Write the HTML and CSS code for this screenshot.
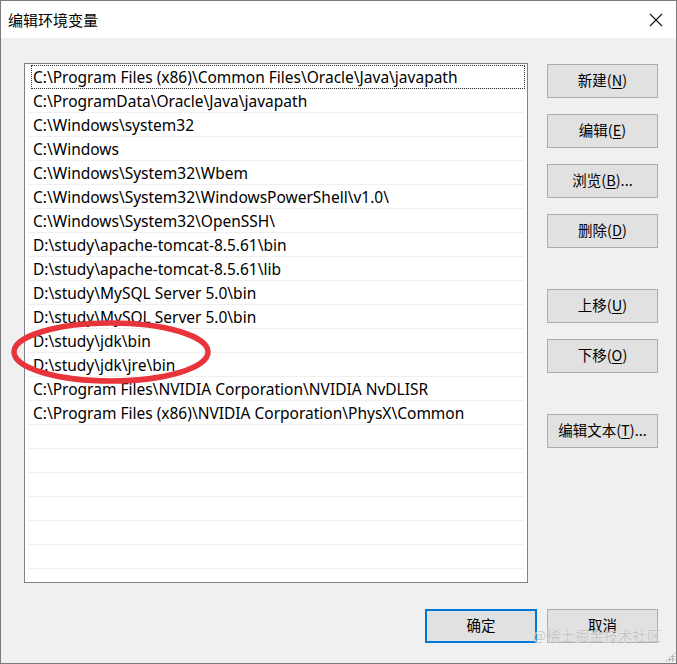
FILE: index.html
```html
<!DOCTYPE html>
<html lang="zh-CN">
<head>
<meta charset="utf-8">
<title>编辑环境变量</title>
<link rel="stylesheet" href="styles.css">
</head>
<body>
<div class="window">
  <div class="titlebar">
    <span class="title">编辑环境变量</span>
    <span class="close">
      <svg width="14" height="14" viewBox="0 0 14 14"><path d="M1 1L13 13M13 1L1 13" stroke="#111" stroke-width="1.1" fill="none"/></svg>
    </span>
  </div>
  <div class="body">
    <div class="main">
      <div class="listbox">
        <div class="row focus">C:\Program Files (x86)\Common Files\Oracle\Java\javapath</div>
        <div class="row">C:\ProgramData\Oracle\Java\javapath</div>
        <div class="row">C:\Windows\system32</div>
        <div class="row">C:\Windows</div>
        <div class="row">C:\Windows\System32\Wbem</div>
        <div class="row">C:\Windows\System32\WindowsPowerShell\v1.0\</div>
        <div class="row">C:\Windows\System32\OpenSSH\</div>
        <div class="row">D:\study\apache-tomcat-8.5.61\bin</div>
        <div class="row">D:\study\apache-tomcat-8.5.61\lib</div>
        <div class="row">D:\study\MySQL Server 5.0\bin</div>
        <div class="row">D:\study\MySQL Server 5.0\bin</div>
        <div class="row">D:\study\jdk\bin</div>
        <div class="row">D:\study\jdk\jre\bin</div>
        <div class="row">C:\Program Files\NVIDIA Corporation\NVIDIA NvDLISR</div>
        <div class="row">C:\Program Files (x86)\NVIDIA Corporation\PhysX\Common</div>
        <div class="row"></div>
        <div class="row"></div>
        <div class="row"></div>
        <div class="row"></div>
        <div class="row"></div>
        <div class="row"></div>
      </div>
      <div class="side">
        <div class="group">
          <button class="btn">新建(<u>N</u>)</button>
          <button class="btn">编辑(<u>E</u>)</button>
          <button class="btn">浏览(<u>B</u>)...</button>
          <button class="btn">删除(<u>D</u>)</button>
        </div>
        <div class="group">
          <button class="btn">上移(<u>U</u>)</button>
          <button class="btn">下移(<u>O</u>)</button>
        </div>
        <div class="group">
          <button class="btn">编辑文本(<u>T</u>)...</button>
        </div>
      </div>
    </div>
    <div class="footer">
      <button class="btn primary">确定</button>
      <button class="btn">取消</button>
    </div>
  </div>
  <svg class="mark" width="210" height="72" viewBox="0 0 210 72"><ellipse cx="105" cy="36" rx="97" ry="29" fill="none" stroke="#e8353c" stroke-width="5.5"/></svg>
  <span class="watermark">@稀土掘金技术社区</span>
  <span class="grip"></span>
</div>
</body>
</html>
```

FILE: styles.css
```css
* { box-sizing: border-box; }
html, body { margin: 0; padding: 0; background: #fff; }
body {
  font-family: "Noto Sans", "Noto Sans CJK SC", sans-serif;
  font-size: 15px;
  color: #000;
}
.window {
  position: relative;
  width: 677px;
  height: 664px;
  border: 1px solid #7a7a7a;
  overflow: hidden;
  display: flex;
  flex-direction: column;
}
.titlebar {
  height: 37px;
  background: #fff;
  display: flex;
  align-items: center;
  justify-content: space-between;
  padding: 0 13px 0 7px;
  flex: none;
}
.title {
  font-family: "Noto Sans CJK SC", sans-serif;
  font-size: 15px;
  line-height: 20px;
}
.close { display: flex; }
.body {
  flex: 1;
  background: #f0f0f0;
  padding: 25px 18px 0 23px;
  display: flex;
  flex-direction: column;
}
.main {
  display: flex;
  gap: 19px;
}
.listbox {
  width: 504px;
  height: 520px;
  background: #fff;
  border: 1px solid #828282;
  padding: 1px 2px 0 2px;
  overflow: hidden;
}
.row {
  height: 24px;
  line-height: 24px;
  border-bottom: 1px solid #f0f0f0;
  padding-left: 6px;
  white-space: nowrap;
  font-family: "Noto Sans", "Noto Sans CJK SC", sans-serif;
  font-size: 15.5px;
}
.row.focus {
  outline: 1px dotted #333;
  outline-offset: -1px;
  margin-left: 4px;
  padding-left: 2px;
}
.side {
  display: flex;
  flex-direction: column;
  gap: 41px;
  padding-top: 1px;
}
.group {
  display: flex;
  flex-direction: column;
  gap: 16px;
}
.btn {
  width: 111px;
  height: 34px;
  background: #e1e1e1;
  border: 1px solid #adadad;
  font-family: "Noto Sans CJK SC", sans-serif;
  font-size: 14.5px;
  line-height: 20px;
  color: #000;
  padding: 0 0 2px 0;
  border-radius: 0;
}
.btn u { text-decoration-thickness: 1px; text-underline-offset: 2px; }
.footer {
  display: flex;
  justify-content: flex-end;
  gap: 10px;
  margin-top: 26px;
}
.btn.primary {
  width: 112px;
  border: 2px solid #0078d7;
}
.mark {
  position: absolute;
  left: 5px;
  top: 315px;
}
.watermark {
  position: absolute;
  left: 532px;
  top: 624px;
  font-family: "Noto Sans CJK SC", sans-serif;
  font-size: 14px;
  color: #c4c4c4;
  letter-spacing: 0.3px;
  text-shadow: 0 0 1px #fff;
}
.grip {
  position: absolute;
  right: 1px;
  bottom: 1px;
  width: 10px;
  height: 10px;
  background-image: radial-gradient(circle, #b8b8b8 1px, transparent 1.2px);
  background-size: 3px 3px;
  clip-path: polygon(100% 0, 100% 100%, 0 100%);
}
```
